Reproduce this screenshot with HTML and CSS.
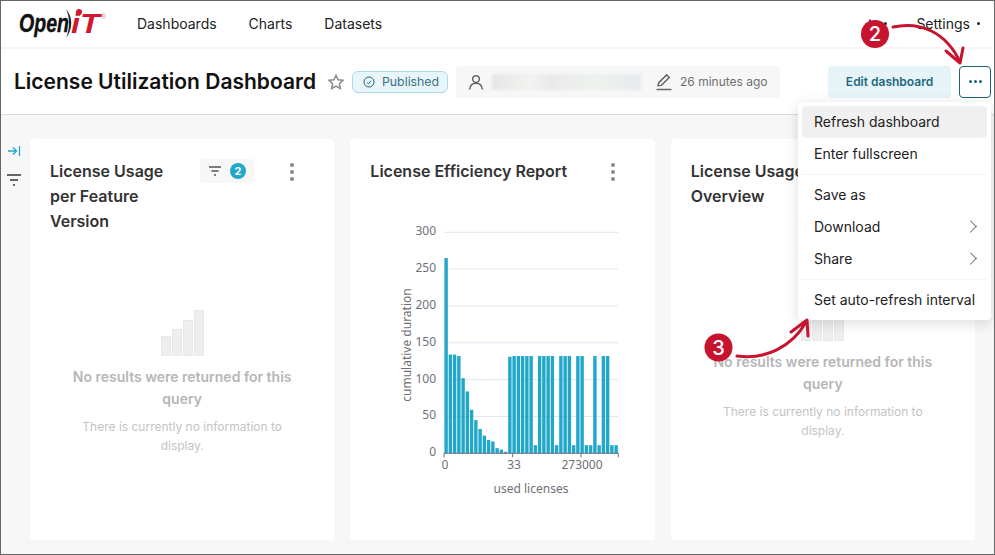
FILE: index.html
```html
<!DOCTYPE html>
<html lang="en">
<head>
    <title>License Utilization Dashboard</title>
    <link rel="stylesheet" href="styles.css">
</head>
<body>
    <div class="app">
        <nav class="topnav">
            <svg class="logo" width="90" height="32" viewBox="0 0 90 32">
                <text class="logo-open" x="0" y="24" textLength="50" lengthAdjust="spacingAndGlyphs">Open</text>
                <path d="M47 1 C54 9 54 21 47 30 C51 21 51 9 47 1 Z" fill="#222"/>
                <circle cx="60" cy="4" r="3" fill="#d2182f"/>
                <text class="logo-it" x="52" y="25" textLength="29" lengthAdjust="spacingAndGlyphs">iT</text>
                <text class="logo-reg" x="82" y="11">®</text>
            </svg>
            <div class="nav-links">
                <a>Dashboards</a>
                <a>Charts</a>
                <a>Datasets</a>
            </div>
            <div class="nav-right">
                <span class="nav-plus">+</span>
                <span class="caret-dot"></span>
                <a class="nav-settings">Settings</a>
                <span class="caret-dot"></span>
            </div>
        </nav>

        <header class="dash-header">
            <h1>License Utilization Dashboard</h1>
            <svg class="star" width="18" height="18" viewBox="0 0 24 24"><path d="M12 3l2.8 6 6.5.8-4.8 4.4 1.3 6.4L12 17.4l-5.8 3.2 1.3-6.4-4.8-4.4 6.5-.8z"/></svg>
            <span class="badge">
                <svg width="12" height="12" viewBox="0 0 24 24"><circle cx="12" cy="12" r="10"/><path d="M8 12.5l3 3 5-6"/></svg>
                Published
            </span>
            <div class="meta">
                <svg class="meta-icon" width="18" height="18" viewBox="0 0 24 24"><circle cx="12" cy="8" r="4.5"/><path d="M3.5 22c.5-6 4-8.5 8.500-8.500s8 2.500 8.500 8.500"/></svg>
                <span class="blurred"></span>
                <svg class="meta-icon" width="18" height="18" viewBox="0 0 24 24"><path d="M4 17l1-4L15.500 2.500l3.500 3.500L8.500 16.500z"/><path d="M2 22h20"/></svg>
                <span class="meta-time">26 minutes ago</span>
            </div>
            <button type="button" class="edit-btn">Edit dashboard</button>
            <button type="button" class="more-btn"><i></i><i></i><i></i></button>
        </header>

        <main class="dash-body">
            <aside class="side-rail">
                <svg width="14" height="12" viewBox="0 0 14 12"><path class="rail-arrow" d="M1 6h8M6 2.500L9.500 6 6 9.500M12.500 1v10"/></svg>
                <svg width="16" height="14" viewBox="0 0 16 14"><path class="rail-filter" d="M1 2h14M4 7h8M7 12h2"/></svg>
            </aside>

            <section class="card">
                <div class="card-head">
                    <h2 class="card-title">License Usage per Feature Version</h2>
                    <span class="filter-pill">
                        <svg width="14" height="12" viewBox="0 0 14 12"><path d="M1 2h12M3.500 6h7M6 10h2"/></svg>
                        <b>2</b>
                    </span>
                    <span class="kebab"><i></i><i></i><i></i></span>
                </div>
                <div class="empty">
                    <div class="empty-bars"><i class="b1"></i><i class="b2"></i><i class="b3"></i><i class="b4"></i></div>
                    <h3>No results were returned for this query</h3>
                    <p>There is currently no information to display.</p>
                </div>
            </section>

            <section class="card">
                <div class="card-head">
                    <h2 class="card-title card-title-wide">License Efficiency Report</h2>
                    <span class="kebab"><i></i><i></i><i></i></span>
                </div>
                <!-- viewBox uses page coordinates so the numbers read off the screen -->
                <svg id="chart" class="chart" width="265" height="300" viewBox="370 200 265 300"></svg>
            </section>

            <section class="card">
                <div class="card-head">
                    <h2 class="card-title">License Usage Overview</h2>
                </div>
                <div class="empty empty-short">
                    <div class="empty-bars"><i class="b1"></i><i class="b2"></i><i class="b3"></i><i class="b4"></i></div>
                    <h3>No results were returned for this query</h3>
                    <p>There is currently no information to display.</p>
                </div>
            </section>
        </main>

        <!-- dropdown open over the cards -->
        <ul class="menu">
            <li class="active">Refresh dashboard</li>
            <li>Enter fullscreen</li>
            <li class="divider"></li>
            <li>Save as</li>
            <li>Download <span class="chevron"></span></li>
            <li>Share <span class="chevron"></span></li>
            <li class="divider"></li>
            <li>Set auto-refresh interval</li>
        </ul>

        <!-- tutorial callouts -->
        <svg class="callouts" width="995" height="555" viewBox="0 0 995 555">
            <g fill="none" stroke="#c8132f" stroke-width="3" stroke-linecap="round" stroke-linejoin="round">
                <path d="M893 27 C920 21 946 32 960 62"/>
                <path d="M946 51 L960 63 L963 48"/>
                <path d="M737 356 C765 360 792 347 806 322"/>
                <path d="M791 332 L807 320 L808 336"/>
            </g>
            <circle cx="875" cy="34" r="14" fill="#c8132f"/>
            <circle cx="718.500" cy="347.500" r="14" fill="#c8132f"/>
            <text class="callout-num" x="875" y="41">2</text>
            <text class="callout-num" x="718.500" y="354.500">3</text>
        </svg>
    </div>

    <script src="chart.js"></script>
</body>
</html>
```

FILE: styles.css
```css
* {
    box-sizing: border-box;
}
body {
    margin: 0;
    font-family: Inter, "Noto Sans", sans-serif;
    color: #222;
}
.app {
    position: relative;
    width: 995px;
    height: 555px;
    border: 1px solid #666;
    overflow: hidden;
    background-color: #f7f7f7;
    display: flex;
    flex-direction: column;
}

/* Top nav */
.topnav {
    height: 48px;
    flex-shrink: 0;
    background-color: white;
    border-bottom: 2px solid #f9f3f3;
    display: flex;
    align-items: center;
    padding: 0 14px 2px 18px;
}
.logo {
    margin-right: 28px;
    margin-top: 2px;
}
.logo-open {
    font: italic bold 26px "Liberation Sans", sans-serif;
    fill: #111;
    stroke: #111;
    stroke-width: 0.4;
}
.logo-it {
    font: italic bold 27px "Liberation Sans", sans-serif;
    fill: #d2182f;
}
.logo-reg {
    font: 7px "Liberation Sans", sans-serif;
    fill: #e08a94;
}
.nav-links {
    display: flex;
    gap: 32px;
    font-size: 14px;
}
.nav-right {
    margin-left: auto;
    display: flex;
    align-items: center;
    font-size: 14px;
}
.nav-plus {
    font-size: 20px;
    margin-right: 8px;
}
.nav-settings {
    margin-left: 29px;
    margin-right: 7px;
}
.caret-dot {
    width: 3px;
    height: 3px;
    border-radius: 50%;
    background-color: #222;
}

/* Title row */
.dash-header {
    height: 66px;
    flex-shrink: 0;
    background-color: white;
    border-bottom: 1px solid #ddd;
    display: flex;
    align-items: center;
    padding: 0 3px 0 13px;
}
h1 {
    margin: 0;
    font-size: 21px;
    font-weight: 600;
    color: #111;
    white-space: nowrap;
}
.star {
    margin-left: 11px;
    fill: none;
    stroke: #8a8a8a;
    stroke-width: 2;
}
.badge {
    margin-left: 7px;
    height: 22px;
    width: 96px;
    border: 1px solid #a8dcea;
    border-radius: 6px;
    background-color: #e8f5f9;
    color: #3b7286;
    font-size: 12.300px;
    display: flex;
    align-items: center;
    gap: 7px;
    padding-left: 10px;
}
.badge svg {
    fill: none;
    stroke: #2b6478;
    stroke-width: 2;
}
.meta {
    margin-left: 8px;
    width: 324px;
    height: 32px;
    border-radius: 4px;
    background-color: #f7f7f7;
    display: flex;
    align-items: center;
    padding-left: 11px;
    color: #6f6f6f;
    font-size: 12px;
}
.meta-icon {
    flex-shrink: 0;
    fill: none;
    stroke: #666;
    stroke-width: 2;
}
.blurred {
    width: 149px;
    height: 16px;
    margin: 0 14px 0 7px;
    background: linear-gradient(90deg, #e6e6e6, #f2f2f0 25%, #e9e9e9 40%, #eef3ee 70%, #e6e9ee);
    filter: blur(1.500px);
}
.meta-time {
    margin-left: 7px;
    white-space: nowrap;
}
.edit-btn {
    margin-left: 48px;
    width: 123px;
    height: 32px;
    border: none;
    border-radius: 4px;
    background-color: #e6f3f7;
    color: #1d6a80;
    font: 600 12px Inter, sans-serif;
}
.more-btn {
    margin-left: 8px;
    width: 32px;
    height: 32px;
    border: 1px solid #1a6478;
    border-radius: 4px;
    background-color: white;
    display: flex;
    align-items: center;
    justify-content: center;
    gap: 2px;
    padding: 0;
}
.more-btn i {
    width: 3px;
    height: 3px;
    border-radius: 50%;
    background-color: #1a6478;
}

/* Cards */
.dash-body {
    flex: 1;
    display: flex;
    gap: 16px;
    padding: 24px 19px 14px 0;
    min-height: 0;
}
.side-rail {
    width: 25px;
    flex-shrink: 0;
    margin-right: -12px;
    display: flex;
    flex-direction: column;
    align-items: center;
    gap: 16px;
    padding-top: 6px;
}
.rail-arrow {
    fill: none;
    stroke: #20a7c9;
    stroke-width: 1.300;
}
.rail-filter {
    fill: none;
    stroke: #666;
    stroke-width: 2;
}
.card {
    flex: 1;
    min-width: 0;
    background-color: white;
    border-radius: 4px;
    padding: 20px;
}
.card-head {
    display: flex;
    align-items: flex-start;
}
.card-title {
    margin: 0;
    width: 130px;
    font-size: 16px;
    font-weight: 600;
    line-height: 25px;
    color: #333;
}
.card-title-wide {
    width: auto;
    white-space: nowrap;
}
.filter-pill {
    margin-left: 20px;
    width: 54px;
    height: 24px;
    border-radius: 4px;
    background-color: #f7f7f7;
    display: flex;
    align-items: center;
    gap: 8px;
    padding-left: 8px;
}
.filter-pill svg {
    fill: none;
    stroke: #555;
    stroke-width: 1.500;
}
.filter-pill b {
    width: 16px;
    height: 16px;
    border-radius: 50%;
    background-color: #20a7c9;
    color: white;
    font-size: 11px;
    line-height: 16px;
    text-align: center;
}
.kebab {
    margin-left: auto;
    margin-right: 20px;
    padding-top: 4px;
    display: flex;
    flex-direction: column;
    gap: 3px;
}
.kebab i {
    width: 4px;
    height: 4px;
    border-radius: 50%;
    background-color: #7f8a90;
}

/* Empty state */
.empty {
    margin-top: 76px;
    text-align: center;
}
.empty-short {
    margin-top: 86px;
}
.empty-bars {
    height: 46px;
    display: flex;
    align-items: flex-end;
    justify-content: center;
    gap: 1px;
}
.empty-bars i {
    width: 10px;
    background-color: #eee;
    border: 1px solid #e8e8e8;
}
.b1 { height: 20px; }
.b2 { height: 27px; }
.b3 { height: 36px; }
.b4 { height: 46px; }
.empty h3 {
    margin: 10px 10px 0;
    font-size: 14px;
    font-weight: 600;
    line-height: 22px;
    color: #b6b6b6;
}
.empty p {
    margin: 7px 15px 0;
    font-size: 12px;
    line-height: 19px;
    color: #c4c4c4;
}

/* Chart */
.chart {
    display: block;
    margin-top: 16px;
}
.chart text {
    font: 12px "Noto Sans", sans-serif;
    fill: #6e7079;
}
.grid-line {
    stroke: #e0e6f1;
}
.axis-line {
    stroke: #6e7079;
}
.bar {
    fill: #20a7c9;
}

/* Dropdown */
.menu {
    position: absolute;
    top: 101px;
    left: 797px;
    width: 193px;
    margin: 0;
    padding: 4px;
    list-style: none;
    background-color: white;
    border-radius: 4px;
    box-shadow: 0 3px 14px rgba(0, 0, 0, 0.14);
    font-size: 14px;
}
.menu li {
    height: 32px;
    display: flex;
    align-items: center;
    justify-content: space-between;
    padding: 0 12px 2px;
    border-radius: 4px;
    white-space: nowrap;
}
.menu li.active {
    background-color: #f0f0f0;
}
.menu li.divider {
    height: 1px;
    margin: 4px 0;
    padding: 0;
    border-radius: 0;
    background-color: #fbf1f1;
}
.chevron {
    width: 9px;
    height: 9px;
    border-top: 1px solid #777;
    border-right: 1px solid #777;
    transform: rotate(45deg);
}

/* Callouts on top of everything */
.callouts {
    position: absolute;
    top: -1px;
    left: -1px;
    pointer-events: none;
}
.callout-num {
    font: 500 20px Inter, sans-serif;
    fill: white;
    text-anchor: middle;
}
```

FILE: chart.js
```js
// used licenses -> cumulative duration
const values = [265, 134, 134, 132, 102, 84, 59, 45, 33, 24, 18, 16, 7, 5, 2,
    131, 132, 132, 132, 132, 132, 11, 132, 132, 132, 132, 11, 132, 132, 132, 11,
    132, 132, 11, 11, 132, 11, 132, 132, 11, 11];

const chart = document.getElementById('chart');
const left = 444, right = 618.3, zero = 453.3, top300 = 232.3;
const yPos = v => zero - (zero - top300) * v / 300;
let html = '';

for (let v = 0; v <= 300; v += 50) {
    const y = yPos(v);
    if (v > 0) html += `<line class="grid-line" x1="${left}" x2="${right}" y1="${y}" y2="${y}"/>`;
    html += `<text x="436" y="${y + 3}" text-anchor="end">${v}</text>`;
}

const step = (right - left) / values.length;
values.forEach((v, i) => {
    html += `<rect class="bar" x="${left + i * step + 0.4}" y="${yPos(v)}" width="3.4" height="${zero - yPos(v)}"/>`;
});

html += `<line class="axis-line" x1="${left}" x2="${right}" y1="${zero}" y2="${zero}"/>`;
[left, 512.6, 581, right].forEach(x => {
    html += `<line class="axis-line" x1="${x}" x2="${x}" y1="${zero}" y2="${zero + 4}"/>`;
});

html += `<text x="445" y="469" text-anchor="middle">0</text>`;
html += `<text x="514" y="469" text-anchor="middle">33</text>`;
html += `<text x="582" y="469" text-anchor="middle">273000</text>`;
html += `<text x="531" y="493" text-anchor="middle">used licenses</text>`;
html += `<text transform="translate(411 345) rotate(-90)" text-anchor="middle">cumulative duration</text>`;

chart.innerHTML = html;
```
